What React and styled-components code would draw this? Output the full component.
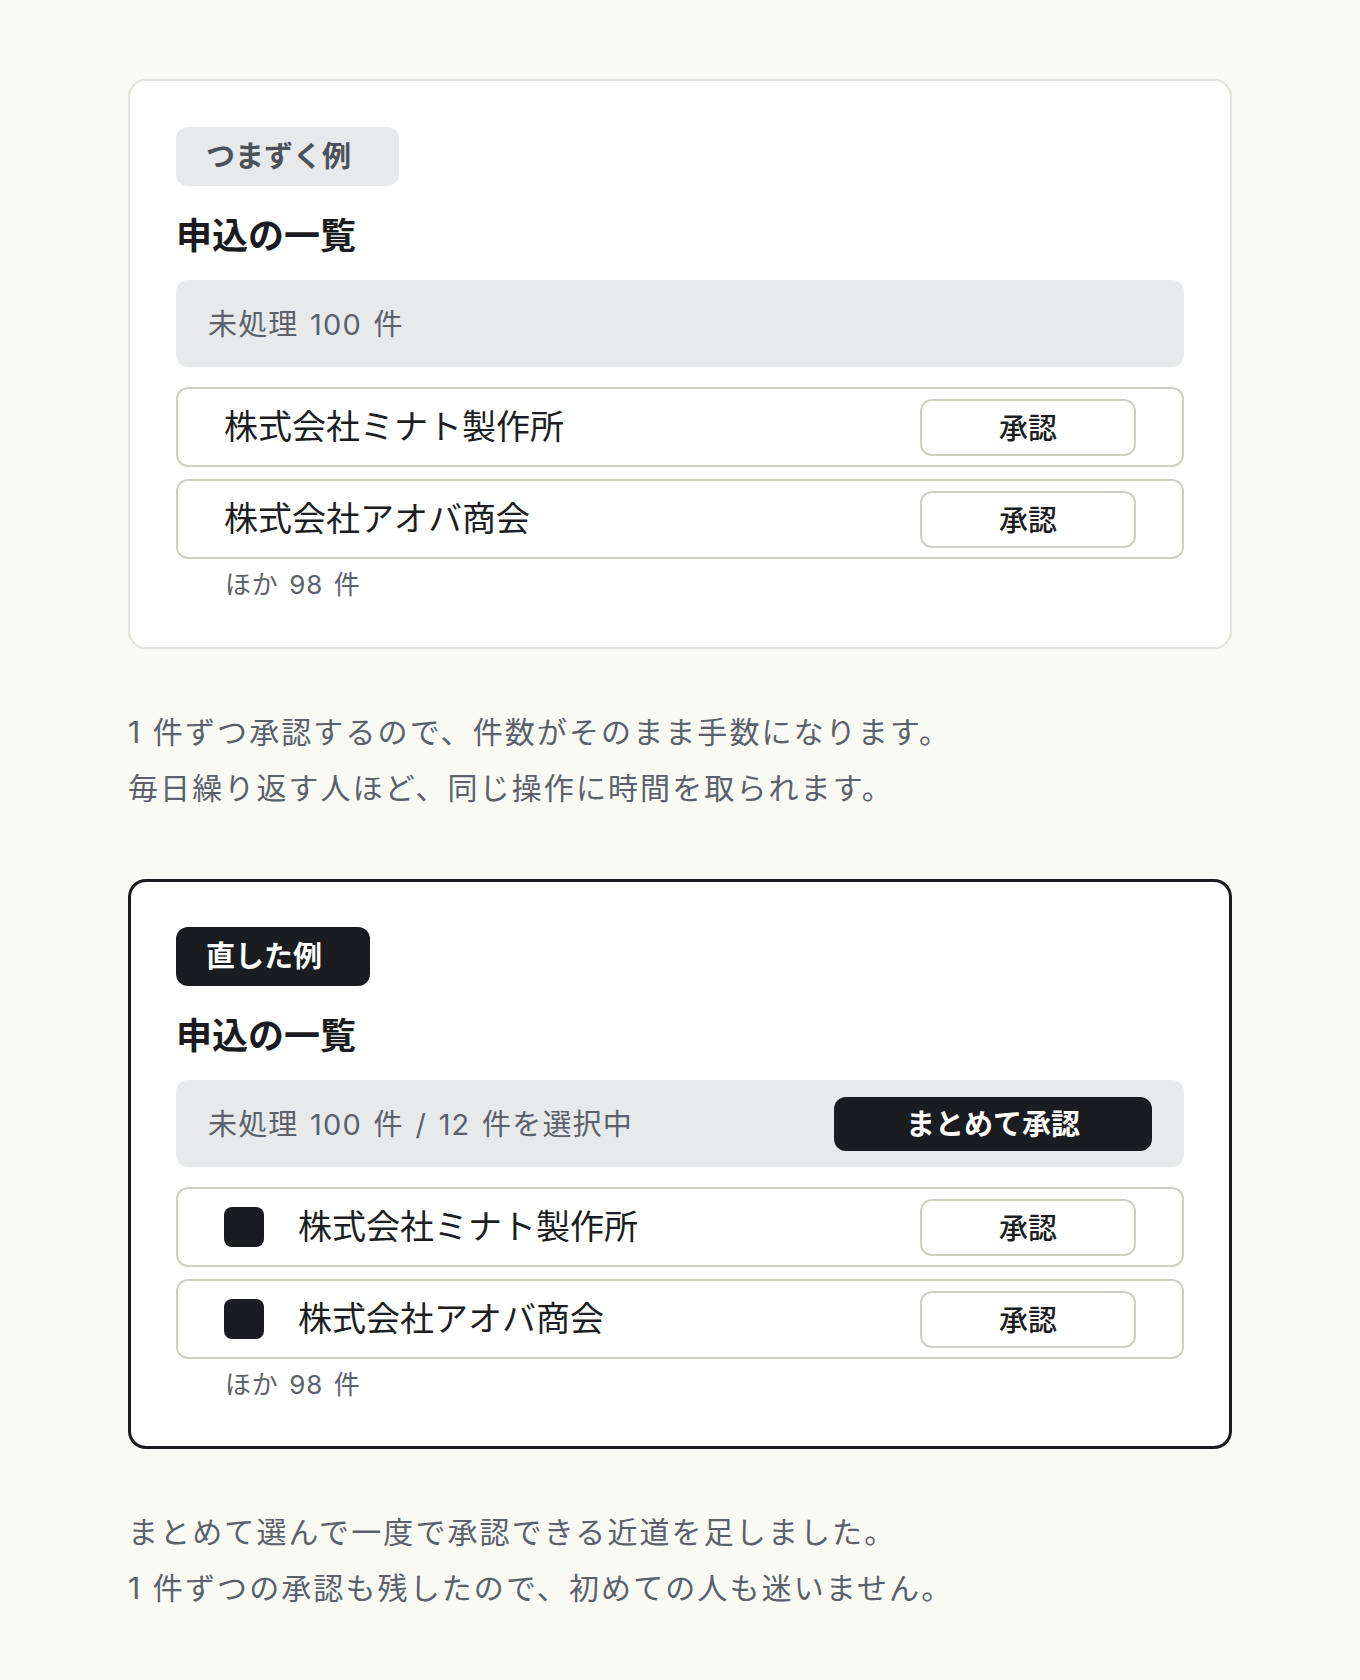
import styled, { createGlobalStyle } from "styled-components";

const GlobalStyle = createGlobalStyle`
    body {
        margin: 0;
        background-color: #f9f9f5;
        font-family: Inter, "Noto Sans CJK JP", "Noto Sans", sans-serif;
        color: #1b1c20;
    }
`;

const Page = styled.main`
    width: 1104px;
    margin: 0 auto;
    padding: 79px 0 80px;
`;

const Section = styled.section`
    & + & {
        margin-top: 63px;
    }
`;

const Card = styled.div`
    display: flex;
    flex-direction: column;
    background-color: #ffffff;
    border: ${(p) => (p.$fixed ? "3px solid #1b1c20" : "2px solid #e3e3db")};
    border-radius: 18px;
    padding: ${(p) => (p.$fixed ? "45px 45px 47px" : "46px 46px 48px")};
`;

const Tag = styled.span`
    align-self: flex-start;
    height: 59px;
    line-height: 59px;
    padding: 0 48px 0 30px;
    border-radius: 12px;
    font-size: 29px;
    font-weight: 700;
    background-color: ${(p) => (p.$dark ? "#1b1c20" : "#e8e9eb")};
    color: ${(p) => (p.$dark ? "#ffffff" : "#4d5159")};
`;

const Title = styled.h2`
    margin: 26px 0 20px;
    font-size: 36px;
    line-height: 48px;
    font-weight: 700;
    color: #1b1c20;
`;

const SummaryBar = styled.div`
    display: flex;
    align-items: center;
    justify-content: space-between;
    height: 87px;
    padding: 0 32px;
    border-radius: 12px;
    background-color: #e8e9eb;
`;

const SummaryText = styled.span`
    padding-bottom: 3px;
    font-size: 29px;
    letter-spacing: 0.04em;
    word-spacing: 0.08em;
    color: #5c6169;
`;

const BulkButton = styled.button`
    height: 54px;
    padding: 0 72px 3px;
    border: 0;
    border-radius: 12px;
    background-color: #1b1c20;
    color: #ffffff;
    font-family: inherit;
    font-size: 29px;
    font-weight: 700;
`;

const RowList = styled.div`
    display: flex;
    flex-direction: column;
    gap: 12px;
    margin-top: 20px;
`;

const Row = styled.div`
    display: flex;
    align-items: center;
    box-sizing: border-box;
    height: 80px;
    padding: 0 46px;
    border: 2px solid #cfcfc5;
    border-radius: 12px;
    background-color: #ffffff;
`;

const Check = styled.span`
    flex: none;
    width: 40px;
    height: 40px;
    margin-right: 34px;
    border-radius: 8px;
    background-color: #1b1c20;
`;

const CompanyName = styled.span`
    flex: 1;
    padding-bottom: 5px;
    font-size: 34px;
    color: #1d1e22;
`;

const ApproveButton = styled.button`
    box-sizing: border-box;
    width: 216px;
    height: 57px;
    padding: 0 0 3px;
    border: 2px solid #cfcfc5;
    border-radius: 12px;
    background-color: #ffffff;
    color: #1d1e22;
    font-family: inherit;
    font-size: 29px;
    font-weight: 500;
`;

const MoreNote = styled.div`
    margin-top: 12px;
    padding-left: 49px;
    font-size: 26px;
    line-height: 28px;
    letter-spacing: 0.03em;
    word-spacing: 0.1em;
    color: #5c6169;
`;

const Caption = styled.p`
    margin: 55px 0 0;
    font-size: 30px;
    line-height: 56px;
    letter-spacing: 0.07em;
    color: #5c6169;
`;

const companies = ["株式会社ミナト製作所", "株式会社アオバ商会"];

function ApplicationList({ fixed }) {
    return (
        <Card $fixed={fixed}>
            <Tag $dark={fixed}>{fixed ? "直した例" : "つまずく例"}</Tag>
            <Title>申込の一覧</Title>
            <SummaryBar>
                <SummaryText>{fixed ? "未処理 100 件 / 12 件を選択中" : "未処理 100 件"}</SummaryText>
                {fixed && <BulkButton type="button">まとめて承認</BulkButton>}
            </SummaryBar>
            <RowList>
                {companies.map((name) => (
                    <Row key={name}>
                        {fixed && <Check />}
                        <CompanyName>{name}</CompanyName>
                        <ApproveButton type="button">承認</ApproveButton>
                    </Row>
                ))}
            </RowList>
            <MoreNote>ほか 98 件</MoreNote>
        </Card>
    );
}

function App() {
    return (
        <>
            <GlobalStyle />
            <Page>
                <Section>
                    <ApplicationList fixed={false} />
                    <Caption>
                        1 件ずつ承認するので、件数がそのまま手数になります。
                        <br />
                        毎日繰り返す人ほど、同じ操作に時間を取られます。
                    </Caption>
                </Section>
                <Section>
                    <ApplicationList fixed={true} />
                    <Caption>
                        まとめて選んで一度で承認できる近道を足しました。
                        <br />
                        1 件ずつの承認も残したので、初めての人も迷いません。
                    </Caption>
                </Section>
            </Page>
        </>
    );
}

export default App;
